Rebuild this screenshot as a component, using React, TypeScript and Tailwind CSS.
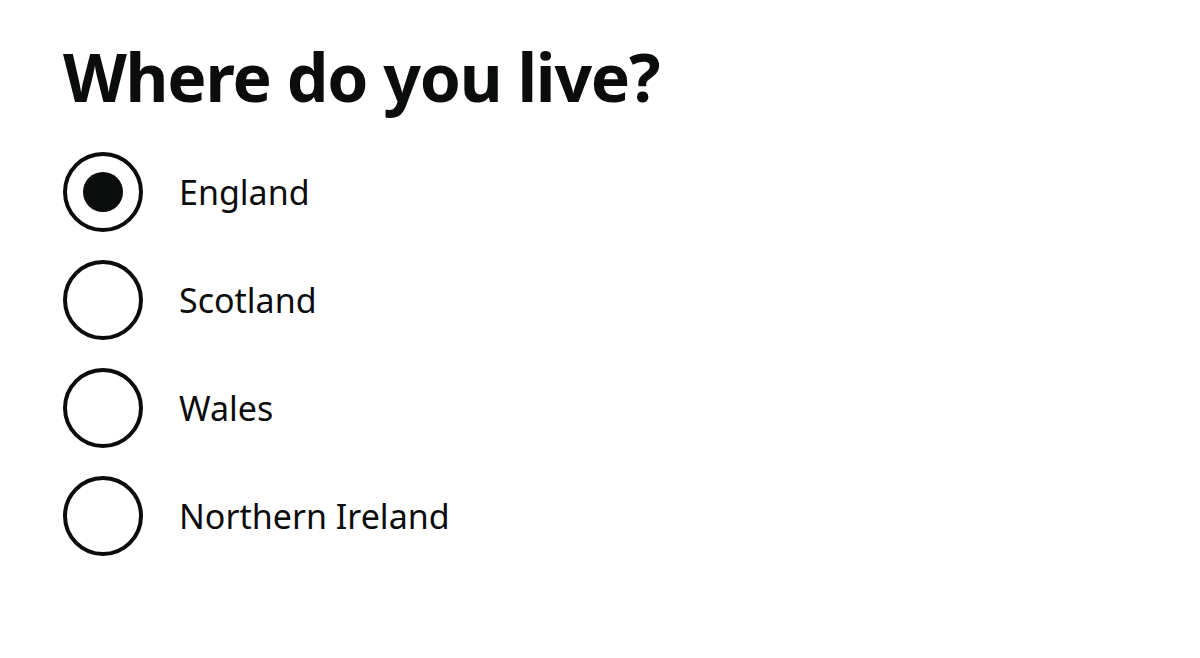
const OPTIONS = ['England', 'Scotland', 'Wales', 'Northern Ireland'];

export default function App() {
  const selected = 'England';
  return (
    <div className="w-[1200px] h-[658px] bg-white text-[#0b0c0c] pl-[63px] pt-[34px]" style={{ fontFamily: '"Noto Sans", Arial, sans-serif' }}>
      <h1 className="text-[66px] font-bold leading-[84px] tracking-[-1.2px]">Where do you live?</h1>
      <div className="mt-[34px] flex flex-col gap-[28px]">
        {OPTIONS.map(o => (
          <label key={o} className="flex items-center gap-[36px]">
            <span className="w-[80px] h-[80px] rounded-full border-[4px] border-[#0b0c0c] flex items-center justify-center">
              {o === selected && <span className="w-[40px] h-[40px] rounded-full bg-[#0b0c0c]" />}
            </span>
            <span className="text-[34px] leading-none">{o}</span>
          </label>
        ))}
      </div>
    </div>
  );
}
